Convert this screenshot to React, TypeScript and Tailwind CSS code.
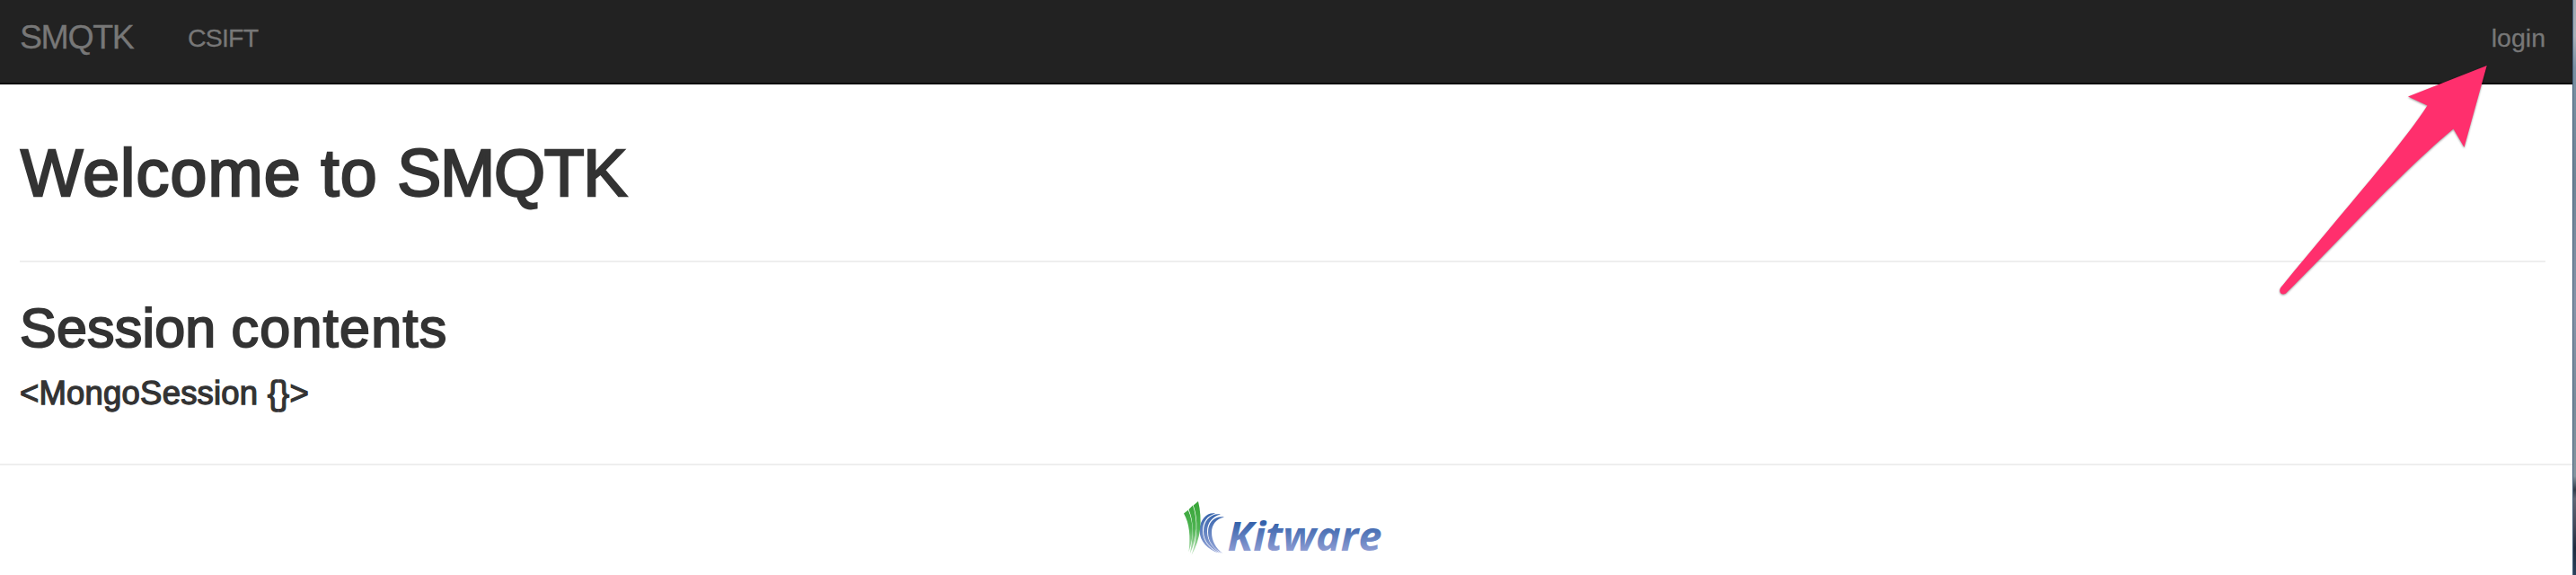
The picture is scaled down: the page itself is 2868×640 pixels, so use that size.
function KitwareLogo() {
  return (
    <svg className="mx-auto h-[84px] w-[232px]" viewBox="0 0 232 84" role="img" aria-label="Kitware">
      <defs>
        <linearGradient id="word" gradientUnits="userSpaceOnUse" x1="0" y1="28" x2="0" y2="63">
          <stop offset="0" stopColor="#2a5ba6" />
          <stop offset="1" stopColor="#8c9bd2" />
        </linearGradient>
        <linearGradient id="leaf" gradientUnits="userSpaceOnUse" x1="0" y1="8" x2="0" y2="68">
          <stop offset="0" stopColor="#37a537" />
          <stop offset="0.5" stopColor="#4db351" />
          <stop offset="1" stopColor="#c5e6c5" />
        </linearGradient>
        <linearGradient id="arc" gradientUnits="userSpaceOnUse" x1="0" y1="21" x2="0" y2="66">
          <stop offset="0" stopColor="#3664ac" />
          <stop offset="1" stopColor="#95a5d8" />
        </linearGradient>
      </defs>
      <g fill="url(#arc)">
        <path d="M37 21.500C28 20 20 28 19.500 40C19.500 53 29 62 41 65.500C30 60 23 52 23 40.500C23 31 28 24 37 21.500Z" />
        <path d="M43 22.500C32 21 24 29.500 24 41.500C24 53 32 61.500 43.500 65.800C34 60 28 52 28 41.500C28 32 34 24.500 43 22.500Z" />
        <path d="M47 25.500C36 24 29 31.500 29 42.500C29 53 35 61 45.500 66C37.500 60 33 52 33 42.500C33 34 38 27.500 47 25.500Z" />
      </g>
      <g fill="url(#leaf)">
        <path d="M2 21.500L6.800 17.800C12.800 31 13.500 47 7.500 64.500C9.500 47 8.500 33 2 21.500Z" />
        <path d="M7.500 17L12 12.500C17.500 29 17.500 48 8.800 66.500C12.500 48 13.500 31 7.500 17Z" />
        <path d="M12.700 12.500L18 8C23 28 21 51 10.500 68C17 50 18.500 29 12.700 12.500Z" />
      </g>
      <text
        x="50.5"
        y="63"
        textLength="172"
        lengthAdjust="spacingAndGlyphs"
        fill="url(#word)"
        className="font-['Open_Sans','Noto_Sans',sans-serif] text-[45px] font-bold italic"
      >
        Kitware
      </text>
    </svg>
  );
}

function PointerArrow() {
  return (
    <svg
      className="absolute left-[2520px] top-[60px] h-[280px] w-[260px] drop-shadow-[0_1px_1px_rgba(0,0,0,0.4)]"
      viewBox="0 60 260 280"
      fill="#ff2f6d"
      aria-hidden="true"
    >
      <path d="M248.700 73L161 107.500L182.500 117.500C152 165 80 245 19 320.500C16 326 22 330 26 325.500C80 272 155 190 211.500 143.500L223.500 164Z" />
    </svg>
  );
}

export default function App() {
  return (
    <div className="relative flex h-[640px] w-[2868px] overflow-hidden bg-white font-['Liberation_Sans',Arial,sans-serif] text-[#333]">
      <div className="flex w-[2864px] flex-col">
        <nav className="flex h-[94px] items-start border-b-2 border-[#080808] bg-[#222] pl-[22px] pr-[30px] text-[28.5px] leading-10 text-[#777]">
          <a className="mt-[21px] w-[127px] whitespace-nowrap text-[37.5px] leading-10 tracking-[-1.4px] [-webkit-text-stroke:0.3px_#777]">SMQTK</a>
          <a className="ml-[60px] mt-[22px] tracking-[-0.8px] [-webkit-text-stroke:0.3px_#777]">CSIFT</a>
          <a className="ml-auto mt-[22px] [-webkit-text-stroke:0.3px_#777]">login</a>
        </nav>
        <main className="mx-[22px] flex flex-col">
          <h1 className="mt-[59px] h-[80px] pl-px text-[73.5px] leading-[80px] tracking-[1.1px] [-webkit-text-stroke:2.4px_#333]">
            Welcome to <span className="tracking-[-1.3px]">SMQTK</span>
          </h1>
          <hr className="mr-[8px] mt-[57px] border-t-2 border-[#eee]" />
          <h2 className="mt-[40px] h-[66px] text-[61px] leading-[66px] tracking-[0.2px] [-webkit-text-stroke:2px_#333]">
            Session <span className="tracking-[1.3px]">contents</span>
          </h2>
          <h4 className="mt-[20px] h-[40px] text-[36.5px] leading-[40px] tracking-[0.2px] [-webkit-text-stroke:1.3px_#333]">{'<MongoSession {}>'}</h4>
        </main>
        <footer className="mt-[58px] flex border-t-2 border-[#eee] pt-[32px]">
          <KitwareLogo />
        </footer>
      </div>
      <div className="w-1 border-l border-[#48617a] bg-[linear-gradient(to_bottom,#9da8b2_0,#a6b0b8_40px,#7890a3_75px,#6e8496_200px,#8593a8_340px,#788b9b_450px,#83949f_530px,#303947_545px,#626675_555px,#454959_585px,#202b3e_610px,#29405b_640px)]" />
      <PointerArrow />
    </div>
  );
}
